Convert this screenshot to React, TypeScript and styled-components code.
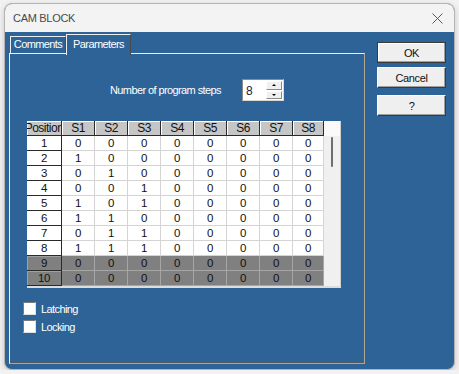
import React from 'react';
import styled, { createGlobalStyle } from 'styled-components';

const Global = createGlobalStyle`
    html, body {
        margin: 0;
        padding: 0;
        background: #f2f2f2;
    }
    body {
        font-family: 'Liberation Sans', Arial, sans-serif;
    }
`;

const BLUE = '#2e6398';

const Window = styled.div`
    margin: 3px 0 0 4px;
    width: 451px;
    height: 367px;
    box-sizing: border-box;
    border: 1px solid #b4b4b4;
    border-radius: 8px;
    overflow: hidden;
    display: flex;
    flex-direction: column;
    background: ${BLUE};
    box-shadow: 0 2px 6px rgba(0, 0, 0, 0.18);
`;

const TitleBar = styled.div`
    flex: none;
    height: 28px;
    display: flex;
    align-items: center;
    justify-content: space-between;
    padding: 0 11px 0 8px;
    background: #f3f3f3;
    color: #4a4a4a;
    font-size: 11px;
    letter-spacing: -0.3px;
`;

const Body = styled.div`
    flex: 1;
    display: flex;
    padding: 2px 0 0 4px;
`;

const LeftCol = styled.div`
    width: 356px;
    display: flex;
    flex-direction: column;
`;

const TabStrip = styled.div`
    height: 19px;
    display: flex;
    align-items: flex-end;
    padding-left: 1px;
    position: relative;
    z-index: 1;
`;

const Tab = styled.div<{ $active?: boolean }>`
    box-sizing: border-box;
    height: ${(p) => (p.$active ? '21px' : '17px')};
    width: ${(p) => (p.$active ? '65px' : '56px')};
    margin-bottom: ${(p) => (p.$active ? '-2px' : '0')};
    border-top: 1px solid #eeeeee;
    border-left: 1px solid #eeeeee;
    border-right: 1px solid #4a4a4a;
    background: ${BLUE};
    color: #ffffff;
    font-size: 11px;
    letter-spacing: -0.6px;
    display: flex;
    justify-content: center;
    padding-top: ${(p) => (p.$active ? '3px' : '1px')};
`;

const Panel = styled.div`
    box-sizing: border-box;
    height: 311px;
    border-top: 1px solid #eeeeee;
    border-left: 1px solid #eeeeee;
    border-right: 1px solid #b0a590;
    border-bottom: 1px solid #b0a590;
    box-shadow: inset -1px -1px 0 #5a5a5a;
    display: flex;
    flex-direction: column;
`;

const StepsRow = styled.div`
    margin: 25px 0 0 100px;
    height: 22px;
    display: flex;
    align-items: center;
    gap: 21px;
`;

const Label = styled.span`
    color: #ffffff;
    font-size: 11px;
    letter-spacing: -0.6px;
`;

const Spinner = styled.div`
    box-sizing: border-box;
    width: 42px;
    height: 22px;
    background: #ffffff;
    border-top: 1px solid #8a8a8a;
    border-left: 1px solid #8a8a8a;
    border-right: 1px solid #d8d8d8;
    border-bottom: 1px solid #d8d8d8;
    display: flex;
    align-items: stretch;
    padding: 1px;
`;

const SpinValue = styled.span`
    flex: 1;
    color: #1c2030;
    font-size: 12px;
    padding: 3px 0 0 2px;
`;

const SpinButtons = styled.div`
    width: 16px;
    display: flex;
    flex-direction: column;
    gap: 1px;
`;

const SpinButton = styled.div<{ $down?: boolean }>`
    flex: 1;
    background: #f0f0f0;
    border-top: 1px solid #ffffff;
    border-left: 1px solid #ffffff;
    border-right: 1px solid #8a8a8a;
    border-bottom: 1px solid #8a8a8a;
    display: flex;
    align-items: center;
    justify-content: center;
    &::after {
        content: '';
        border-left: 2px solid transparent;
        border-right: 2px solid transparent;
        ${(p) => (p.$down ? 'border-top: 2px solid #000;' : 'border-bottom: 2px solid #000;')}
    }
`;

const Grid = styled.div`
    margin: 20px 0 0 17px;
    width: 314px;
    height: 167px;
    display: flex;
    box-sizing: border-box;
    border-bottom: 2px solid #dcdcdc;
`;

const Table = styled.div`
    width: 297px;
    display: flex;
    flex-direction: column;
`;

const Row = styled.div`
    display: flex;
    height: 15px;
`;

type CellKind = 'head' | 'rowhead' | 'data';

const Cell = styled.div<{ $kind: CellKind; $w: number; $shade?: boolean }>`
    box-sizing: border-box;
    width: ${(p) => p.$w}px;
    height: 15px;
    flex: none;
    display: flex;
    align-items: center;
    justify-content: center;
    overflow: hidden;
    white-space: nowrap;
    font-size: ${(p) => (p.$kind === 'head' ? '12px' : '11.5px')};
    letter-spacing: -0.5px;
    color: #111111;
    background: ${(p) => (p.$shade ? '#808080' : p.$kind === 'head' ? '#c6c6c6' : '#ffffff')};
    border-right: 1px solid
        ${(p) => (p.$kind === 'data' ? (p.$shade ? '#a6a6a6' : '#d4d4d4') : '#2a2a2a')};
    border-bottom: 1px solid
        ${(p) => (p.$kind === 'data' ? (p.$shade ? '#a6a6a6' : '#d4d4d4') : '#2a2a2a')};
    box-shadow: ${(p) => (p.$kind === 'data' ? 'none' : `inset 1px 1px 0 ${p.$shade ? '#a0a0a0' : '#ffffff'}`)};
`;

const ScrollTrack = styled.div`
    width: 17px;
    box-sizing: border-box;
    background: #f0f0f0;
    border-right: 1px solid #d0d0d0;
    display: flex;
    flex-direction: column;
    align-items: center;
`;

const ScrollCorner = styled.div`
    height: 15px;
    width: 100%;
    background: #fafafa;
    flex: none;
`;

const Thumb = styled.div`
    margin: 1px 0 0 -1px;
    width: 2px;
    height: 30px;
    background: #6e6e6e;
    border-radius: 1px;
`;

const Checks = styled.div`
    margin: 14px 0 0 13px;
    display: flex;
    flex-direction: column;
    gap: 5px;
`;

const CheckRow = styled.label`
    display: flex;
    align-items: center;
    gap: 5px;
    height: 13px;
`;

const CheckBox = styled.span`
    box-sizing: border-box;
    width: 13px;
    height: 13px;
    background: #ffffff;
    border-top: 1px solid #7a7a7a;
    border-left: 1px solid #7a7a7a;
    border-right: 1px solid #e0e0e0;
    border-bottom: 1px solid #e0e0e0;
`;

const ButtonCol = styled.div`
    margin: 8px 0 0 12px;
    display: flex;
    flex-direction: column;
`;

const Button = styled.div<{ $default?: boolean; $gap: number }>`
    box-sizing: border-box;
    width: 69px;
    height: 21px;
    margin-top: ${(p) => p.$gap}px;
    background: #efefef;
    border: 1px solid ${(p) => (p.$default ? '#3a3a3a' : '#ffffff')};
    border-right-color: #3a3a3a;
    border-bottom-color: #3a3a3a;
    box-shadow: inset -1px -1px 0 #a0a0a0 ${(p) => (p.$default ? ', inset 1px 1px 0 #ffffff' : '')};
    display: flex;
    align-items: center;
    justify-content: center;
    font-size: 11px;
    letter-spacing: -0.4px;
    color: #111111;
`;

const widths = [35, 33, 33, 33, 33, 33, 33, 33, 31];

const rows: number[][] = [
    [0, 0, 0],
    [1, 0, 0],
    [0, 1, 0],
    [0, 0, 1],
    [1, 0, 1],
    [1, 1, 0],
    [0, 1, 1],
    [1, 1, 1],
    [0, 0, 0],
    [0, 0, 0],
];

const CloseIcon = () => (
    <svg width="11" height="11" viewBox="0 0 11 11">
        <path d="M0.5 0.5 L10.5 10.5 M10.5 0.5 L0.5 10.5" stroke="#5a5a5a" strokeWidth="1" />
    </svg>
);

const App = () => {
    return (
        <>
            <Global />
            <Window>
                <TitleBar>
                    <span>CAM BLOCK</span>
                    <CloseIcon />
                </TitleBar>
                <Body>
                    <LeftCol>
                        <TabStrip>
                            <Tab>Comments</Tab>
                            <Tab $active>Parameters</Tab>
                        </TabStrip>
                        <Panel>
                            <StepsRow>
                                <Label>Number of program steps</Label>
                                <Spinner>
                                    <SpinValue>8</SpinValue>
                                    <SpinButtons>
                                        <SpinButton />
                                        <SpinButton $down />
                                    </SpinButtons>
                                </Spinner>
                            </StepsRow>
                            <Grid>
                                <Table>
                                    <Row>
                                        {['Position', 'S1', 'S2', 'S3', 'S4', 'S5', 'S6', 'S7', 'S8'].map((h, i) => (
                                            <Cell key={h} $kind="head" $w={widths[i]}>
                                                {h}
                                            </Cell>
                                        ))}
                                    </Row>
                                    {rows.map((bits, r) => {
                                        const shade = r >= 8;
                                        const values = [...bits, 0, 0, 0, 0, 0];
                                        return (
                                            <Row key={r}>
                                                <Cell $kind="rowhead" $w={widths[0]} $shade={shade}>
                                                    {r + 1}
                                                </Cell>
                                                {values.map((v, c) => (
                                                    <Cell key={c} $kind="data" $w={widths[c + 1]} $shade={shade}>
                                                        {v}
                                                    </Cell>
                                                ))}
                                            </Row>
                                        );
                                    })}
                                </Table>
                                <ScrollTrack>
                                    <ScrollCorner />
                                    <Thumb />
                                </ScrollTrack>
                            </Grid>
                            <Checks>
                                <CheckRow>
                                    <CheckBox />
                                    <Label>Latching</Label>
                                </CheckRow>
                                <CheckRow>
                                    <CheckBox />
                                    <Label>Locking</Label>
                                </CheckRow>
                            </Checks>
                        </Panel>
                    </LeftCol>
                    <ButtonCol>
                        <Button $default $gap={0}>OK</Button>
                        <Button $gap={4}>Cancel</Button>
                        <Button $gap={7}>?</Button>
                    </ButtonCol>
                </Body>
            </Window>
        </>
    );
};

export default React.memo(App);
